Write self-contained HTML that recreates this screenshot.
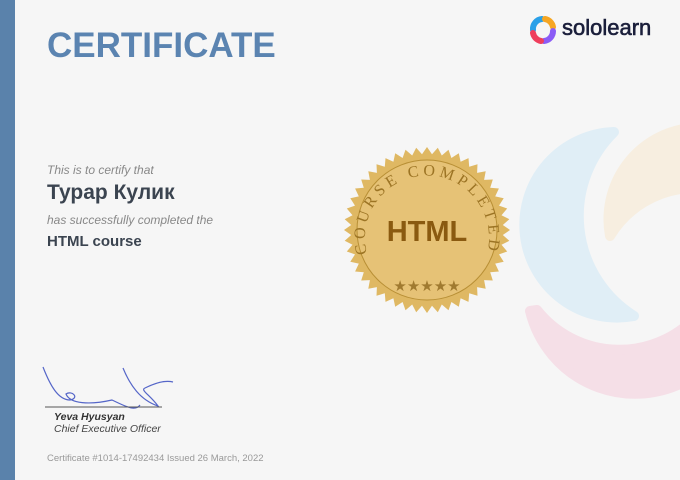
<!DOCTYPE html>
<html><head><meta charset="utf-8"><style>
body{margin:0;width:680px;height:480px;overflow:hidden;background:#f6f6f6;font-family:"Liberation Sans",Arial,sans-serif;position:relative}
.bar{position:absolute;left:0;top:0;width:15px;height:480px;background:#5a82ab}
.t{position:absolute;left:47px;white-space:nowrap}
</style></head><body>
<svg width="680" height="480" style="position:absolute;left:0;top:0">
<g stroke-linejoin="round" stroke-width="10">
<path d="M614 132 A92.8 92.8 0 1 0 634 316 A118 118 0 0 1 614 132 Z" fill="#e0eef6" stroke="#e0eef6"/>
<path d="M690 128 A92 92 0 0 0 610 236 A100 100 0 0 1 690 188 Z" fill="#f7eee0" stroke="#f7eee0"/>
<path d="M530 311 A108 108 0 0 0 700 372 L700 312 A105 105 0 0 1 537 310 Z" fill="#f5dfe7" stroke="#f5dfe7"/>
</g>
<g transform="translate(427,230)">
<polygon fill="#dfb863" points="" id="st"/>
<circle r="70" fill="#e6c276" stroke="#b88f35" stroke-width="1"/>
<defs><path id="arc" d="M-57 32 A62 62 0 1 1 57 32"/></defs>
<text font-family="Liberation Serif,serif" font-size="16" letter-spacing="4" fill="#9c7424"><textPath href="#arc" startOffset="50%" text-anchor="middle">COURSE  COMPLETED</textPath></text>
<text y="11" text-anchor="middle" font-weight="bold" font-size="29" fill="#8a5a10">HTML</text>
<text y="61" text-anchor="middle" font-size="15" fill="#a07a30">★★★★★</text>
</g>
<g fill="none" stroke="#5566c8" stroke-width="1.2">
<path d="M43 367 C50 385 58 400 70 400 C80 398 72 390 66 394 C70 404 90 405 112 400 C125 406 135 412 140 405"/>
<path d="M123 368 C130 385 140 400 158 406 C150 395 140 390 145 388 C155 383 165 380 173 382"/>
</g>
<line x1="45" y1="407" x2="162" y2="407" stroke="#555" stroke-width="1"/>
</svg>
<script>
var p=[],n=48;for(var i=0;i<n*2;i++){var r=i%2?76:83,a=i*Math.PI/n;p.push((r*Math.cos(a)).toFixed(1)+","+(r*Math.sin(a)).toFixed(1));}
document.getElementById("st").setAttribute("points",p.join(" "));
</script>
<div class="bar"></div>
<div class="t" style="top:26px;font-size:35px;font-weight:bold;color:#5b84b1">CERTIFICATE</div>
<div class="t" style="top:163px;font-size:12px;font-style:italic;color:#888">This is to certify that</div>
<div class="t" style="top:181px;font-size:21px;font-weight:bold;color:#3b4450">Турар Кулик</div>
<div class="t" style="top:213px;font-size:12px;font-style:italic;color:#888">has successfully completed the</div>
<div class="t" style="top:233px;font-size:15px;font-weight:bold;color:#3b4450">HTML course</div>
<div class="t" style="left:54px;top:411px;font-size:10.5px;font-weight:bold;font-style:italic;color:#333">Yeva Hyusyan</div>
<div class="t" style="left:54px;top:423px;font-size:10.5px;font-style:italic;color:#444">Chief Executive Officer</div>
<div class="t" style="top:453px;font-size:9.5px;color:#999">Certificate #1014-17492434 Issued 26 March, 2022</div>
<svg width="30" height="30" viewBox="0 0 30 30" style="position:absolute;left:528px;top:15px">
<path d="M14 4 A10 10 0 0 0 5 15" stroke="#2aa0e8" stroke-width="6" fill="none" stroke-linecap="round"/>
<path d="M17 4 A10 10 0 0 1 25 12" stroke="#f6a623" stroke-width="6" fill="none" stroke-linecap="round"/>
<path d="M25 16 A10 10 0 0 1 16 26" stroke="#8b5cf6" stroke-width="6" fill="none" stroke-linecap="round"/>
<path d="M13 26 A10 10 0 0 1 5 18" stroke="#ef3e5c" stroke-width="6" fill="none" stroke-linecap="round"/>
</svg>
<div style="position:absolute;left:562px;top:15px;font-size:22px;color:#1b1f3b;-webkit-text-stroke:0.6px #1b1f3b">sololearn</div>
</body></html>
